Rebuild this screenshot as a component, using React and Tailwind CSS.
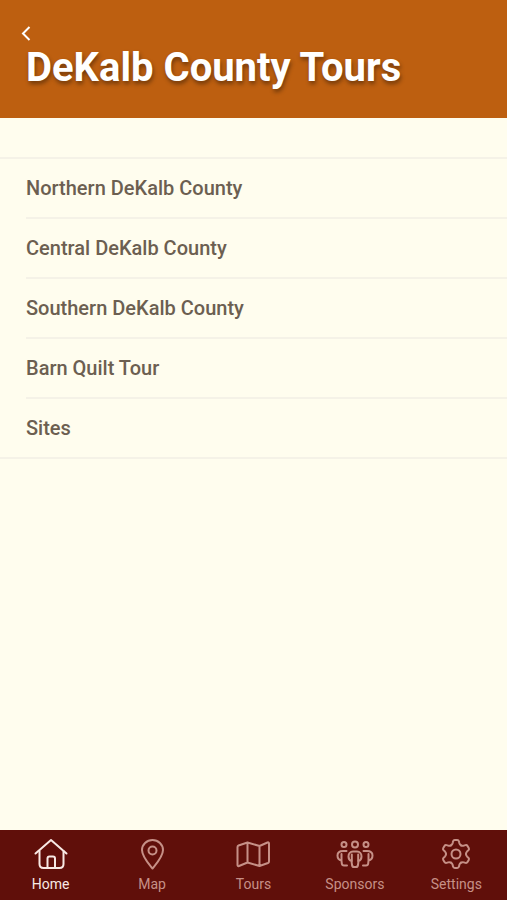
import React from "react";

const tours = [
  "Northern DeKalb County",
  "Central DeKalb County",
  "Southern DeKalb County",
  "Barn Quilt Tour",
  "Sites",
];

const HomeIcon = () => (
  <>
    <path d="M1.500 15.500 17 2l15.500 13.500" />
    <path d="M5.500 13v13q0 4 4 4h16q4 0 4-4V13" />
    <path d="M13.500 30V20.500q0-2 2-2h3.500q2 0 2 2V30" />
  </>
);

const MapIcon = () => (
  <>
    <path d="M17.500 30.500C13 25 7 18.500 7 12a10.500 10 0 0 1 21 0c0 6.500-6 13-10.500 18.500Z" />
    <circle cx="17.500" cy="12.500" r="4" />
  </>
);

const ToursIcon = () => (
  <path d="M11.500 4.500 2.500 7.500q-1 .4-1 1.500v18q0 1.500 1.500 1l8.500-3.500 12 3.500 8.500-3q1-.4 1-1.500V5.500q0-1.500-1.500-1l-8 3.500-12-3.500v20M23.500 8v20" />
);

const SponsorsIcon = () => (
  <>
    <circle cx="6" cy="6.500" r="2.500" />
    <circle cx="17" cy="6.500" r="3" />
    <circle cx="28" cy="6.500" r="2.500" />
    <path d="M15 13.500h4c3 0 4.500 2.500 4.500 5s-1.500 4-3 4.500l-.5 4q-.3 2-2 2h-2q-1.700 0-2-2l-.5-4c-1.500-.5-3-2-3-4.500s1.500-5 4.500-5Z" />
    <path d="M13.800 16.500V23M20.200 16.500V23" />
    <path d="M8.500 13H5c-3.500 0-5.500 2-5.500 4.500S1 22 3.500 22.500l.3 3q.2 2 2.200 2h3M3.500 16v6.500" />
    <path d="M25.500 13H29c3.500 0 5.500 2 5.500 4.500S33 22 30.500 22.500l-.3 3q-.2 2-2.200 2h-3M30.500 16v6.500" />
  </>
);

const teeth = [0, 60, 120, 180, 240, 300];

const SettingsIcon = () => (
  <g transform="translate(17 16)">
    {teeth.map((angle) => (
      <path
        key={angle}
        transform={`rotate(${angle})`}
        d="M-5-8.660Q-3.700-9.400-3.300-11L-3-12.600Q-2.600-14-1.200-14H1.200Q2.600-14 3-12.600L3.300-11Q3.700-9.400 5-8.660"
      />
    ))}
    <circle r="4.500" />
  </g>
);

const tabs = [
  { name: "Home", icon: HomeIcon, active: true },
  { name: "Map", icon: MapIcon },
  { name: "Tours", icon: ToursIcon },
  { name: "Sponsors", icon: SponsorsIcon },
  { name: "Settings", icon: SettingsIcon },
];

const Header = () => (
  <header className="bg-[#bd5f10] px-5 pt-6 pb-6 text-white">
    <button type="button" aria-label="Back" className="block cursor-pointer">
      <svg width="12" height="18" viewBox="0 0 12 18" fill="none" stroke="currentColor" strokeWidth="2">
        <path d="M9.500 3 3 9.500 9.500 16" />
      </svg>
    </button>
    <h1 className="px-1.5 text-[40px] leading-[52px] font-bold [text-shadow:1px_3px_4px_rgba(0,0,0,0.4)]">
      DeKalb County Tours
    </h1>
  </header>
);

const TourList = () => (
  <ul className="mt-[39px] border-y-2 border-[#f5f2e7]">
    {tours.map((tour) => (
      <li key={tour} className="group pl-[26px]">
        <a
          href="#"
          className="flex h-[60px] items-center border-b-2 border-[#f5f2e7] text-[20px] font-medium text-[#6c5f51] group-last:h-[58px] group-last:border-b-0"
        >
          {tour}
        </a>
      </li>
    ))}
  </ul>
);

const TabBar = () => (
  <nav className="grid h-[70px] grid-cols-5 bg-[#600f0a]">
    {tabs.map(({ name, icon: Icon, active }) => (
      <a
        key={name}
        href="#"
        aria-current={active ? "page" : undefined}
        className={`flex flex-col items-center gap-1 pt-2 text-[14px] leading-5 ${
          active ? "text-[#f8e9e4]" : "text-[#c69087]"
        }`}
      >
        <svg
          width="34"
          height="32"
          viewBox="0 0 34 32"
          fill="none"
          stroke="currentColor"
          strokeWidth="2"
          strokeLinecap="round"
          strokeLinejoin="round"
          className="overflow-visible"
        >
          <Icon />
        </svg>
        {name}
      </a>
    ))}
  </nav>
);

export default function App() {
  return (
    <div className="flex min-h-screen flex-col bg-[#fffdee] font-['Roboto',sans-serif]">
      <Header />
      <main className="flex-1">
        <TourList />
      </main>
      <TabBar />
    </div>
  );
}
